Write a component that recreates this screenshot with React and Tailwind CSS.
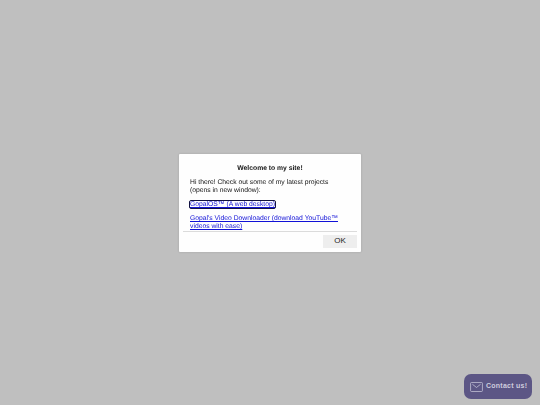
export default function App() {
  return (
    <div className="relative flex h-[405px] w-[540px] items-center justify-center overflow-hidden bg-[#bfbfbf] font-['Liberation_Sans',Arial,sans-serif] [text-rendering:geometricPrecision]">
      <div className="flex h-[98px] w-[182px] flex-col rounded-[1px] bg-white opacity-[0.99] shadow-[0_0_3px_rgba(0,0,0,0.15)]">
        <div className="mx-[4px] h-[78px] overflow-hidden border-b border-[#dcdcdc] px-[7px] pt-[11.5px] text-[6.78px] leading-[8px] text-[#111]">
          <h1 className="text-center text-[6.78px] leading-[8px] font-bold">Welcome to my site!</h1>
          <p className="mt-[6px]">
            Hi there! Check out some of my latest projects
            <br />
            (opens in new window):
          </p>
          <p className="mt-[6px]">
            <a href="#gopalos" className="rounded-[1px] text-[#1010d8] underline outline outline-[1px] outline-[#101040]">GopalOS™ (A web desktop)</a>
          </p>
          <p className="mt-[6px]">
            <a href="#downloader" className="text-[#1010d8] underline">Gopal's Video Downloader (download YouTube™ videos with ease)</a>
          </p>
        </div>
        <div className="flex justify-end px-[4px] pt-[3px]">
          <button className="h-[13px] w-[34px] bg-[#efefef] text-[8px] leading-none text-[#222]">OK</button>
        </div>
      </div>

      <button className="absolute right-[8px] bottom-[6px] flex h-[25px] w-[68px] items-center gap-[3px] rounded-[7px] bg-[#5b5585] pl-[6px] text-[7px] font-bold tracking-[0.25px] whitespace-nowrap text-[#cfcddf] opacity-[0.99]">
        <svg viewBox="0 0 14 11" className="h-[10px] w-[13px] shrink-0" fill="none" stroke="currentColor" strokeWidth="0.8">
          <rect x="0.5" y="0.5" width="13" height="10" rx="1" />
          <path d="M2.5 2.5 7 6l4.5-3.5" />
        </svg>
        Contact us!
      </button>
    </div>
  );
}
